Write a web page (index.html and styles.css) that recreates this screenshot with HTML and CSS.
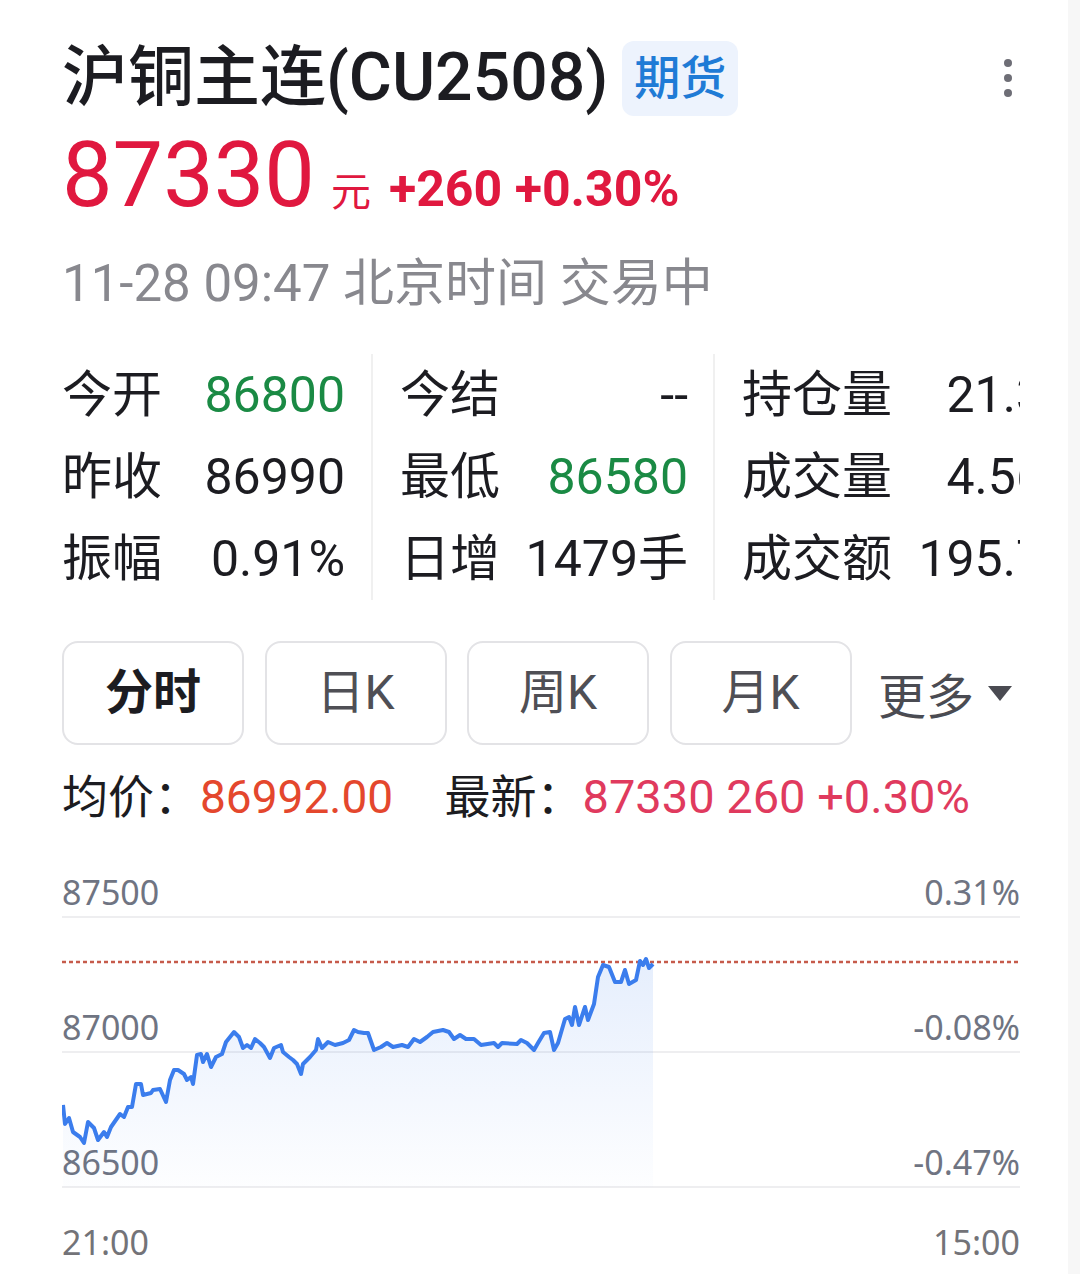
FILE: index.html
```html
<!DOCTYPE html>
<html>
<head lang="zh">
    <meta charset="UTF-8">
    <title>沪铜主连</title>
    <link rel="stylesheet" href="styles.css">
</head>
<body>
    <div id="page">
        <div class="head">
            <h1 class="name">沪铜主连(CU2508)</h1>
            <span class="tag">期货</span>
            <span class="more-dots"><i></i><i></i><i></i></span>
        </div>
        <div class="price">
            <span class="price-now">87330</span>
            <span class="price-unit">元</span>
            <span class="price-chg">+260 +0.30%</span>
        </div>
        <div class="status">11-28 09:47 北京时间 交易中</div>

        <div class="stats">
            <div class="stats-col col1">
                <div class="cell"><span>今开</span><b class="green">86800</b></div>
                <div class="cell"><span>昨收</span><b>86990</b></div>
                <div class="cell"><span>振幅</span><b>0.91%</b></div>
            </div>
            <div class="stats-col col2">
                <div class="cell"><span>今结</span><b>--</b></div>
                <div class="cell"><span>最低</span><b class="green">86580</b></div>
                <div class="cell"><span>日增</span><b>1479手</b></div>
            </div>
            <div class="stats-col col3">
                <div class="cell"><span>持仓量</span><b>21.3万</b></div>
                <div class="cell"><span>成交量</span><b>4.56万</b></div>
                <div class="cell"><span>成交额</span><b>195.7亿</b></div>
            </div>
        </div>

        <div class="tabs">
            <span class="tab active">分时</span>
            <span class="tab">日K</span>
            <span class="tab">周K</span>
            <span class="tab">月K</span>
            <span class="tab-more">更多<i class="caret"></i></span>
        </div>

        <div class="avg">
            <span>均价：</span><span class="avg-val">86992.00</span>
            <span class="latest-label">最新：</span><span class="latest-val">87330 260 +0.30%</span>
        </div>

        <div class="chart">
            <div class="grid-row first"><span>87500</span><span>0.31%</span></div>
            <div class="grid-row"><span>87000</span><span>-0.08%</span></div>
            <div class="grid-row"><span>86500</span><span>-0.47%</span></div>
            <svg class="plot" viewBox="0 0 958 361" width="958" height="361">
                <defs>
                    <linearGradient id="fill" x1="0" y1="0" x2="0" y2="1">
                        <stop offset="0" stop-color="#3b7ded" stop-opacity="0.13"/>
                        <stop offset="1" stop-color="#3b7ded" stop-opacity="0.01"/>
                    </linearGradient>
                </defs>
                <path fill="url(#fill)" d="M1,278 L3,297 7,291 11,305 18,310 22,316 26,295 32,301 36,313 42,305 45,310 49,300 58,287 62,290 66,280 70,280 74,257 79,257 81,268 89,266 91,263 98,262 104,275 108,253 112,243 116,243 122,247 125,253 129,250 131,257 135,228 139,227 141,235 145,227 149,240 154,230 160,227 164,215 168,210 172,205 177,210 181,221 185,218 189,221 193,212 198,216 202,220 208,231 212,221 219,218 221,225 227,230 231,233 235,237 239,247 241,237 248,230 254,223 256,212 260,221 266,215 273,218 281,216 287,213 292,203 296,205 302,206 306,206 312,223 319,220 325,216 331,220 340,218 346,220 352,212 358,215 365,210 371,205 381,203 387,205 392,212 398,208 404,212 412,212 419,218 432,216 436,220 440,216 455,217 459,213 465,216 472,223 476,216 482,206 488,205 492,223 496,216 503,192 507,190 510,198 513,180 517,198 523,180 526,193 532,177 536,150 541,138 547,140 553,155 559,155 563,143 567,157 574,153 578,134 581,138 584,132 587,141 591,137 L591,360 L1,360 Z"/>
                <line x1="0" y1="135" x2="958" y2="135" stroke="#c65b4b" stroke-width="2.5" stroke-dasharray="4 3"/>
                <path fill="none" stroke="#3b7ded" stroke-width="4" stroke-linejoin="round" d="M1,278 L3,297 7,291 11,305 18,310 22,316 26,295 32,301 36,313 42,305 45,310 49,300 58,287 62,290 66,280 70,280 74,257 79,257 81,268 89,266 91,263 98,262 104,275 108,253 112,243 116,243 122,247 125,253 129,250 131,257 135,228 139,227 141,235 145,227 149,240 154,230 160,227 164,215 168,210 172,205 177,210 181,221 185,218 189,221 193,212 198,216 202,220 208,231 212,221 219,218 221,225 227,230 231,233 235,237 239,247 241,237 248,230 254,223 256,212 260,221 266,215 273,218 281,216 287,213 292,203 296,205 302,206 306,206 312,223 319,220 325,216 331,220 340,218 346,220 352,212 358,215 365,210 371,205 381,203 387,205 392,212 398,208 404,212 412,212 419,218 432,216 436,220 440,216 455,217 459,213 465,216 472,223 476,216 482,206 488,205 492,223 496,216 503,192 507,190 510,198 513,180 517,198 523,180 526,193 532,177 536,150 541,138 547,140 553,155 559,155 563,143 567,157 574,153 578,134 581,138 584,132 587,141 591,137"/>
            </svg>
        </div>
        <div class="time-axis"><span>21:00</span><span>15:00</span></div>
    </div>
</body>
</html>
```

FILE: styles.css
```css
*{
    margin: 0;
    padding: 0;
    box-sizing: border-box;
}
html{
    background: #f7f7f7;
}
body{
    width: 1068px;
    min-height: 1274px;
    background: #fff;
    font-family: Roboto, "Noto Sans CJK SC", sans-serif;
    color: #1c1c21;
}
#page{
    padding: 40px 48px 0 62px;
}
.head{
    display: flex;
    align-items: center;
    height: 76px;
    white-space: nowrap;
}
.name{
    font-size: 66px;
    font-weight: 500;
    line-height: 76px;
}
.tag{
    margin-left: 14px;
    height: 75px;
    padding: 0 12px;
    border-radius: 12px;
    background: #edf3fd;
    color: #1f7bd6;
    font-size: 46px;
    font-weight: 500;
    line-height: 75px;
}
.more-dots{
    margin-left: auto;
    margin-right: 8px;
    display: flex;
    flex-direction: column;
    gap: 7px;
}
.more-dots i{
    width: 8px;
    height: 8px;
    border-radius: 50%;
    background: #6e6e76;
}
.price{
    margin-top: 15px;
    height: 90px;
    display: flex;
    align-items: baseline;
    color: #e0183f;
    line-height: 90px;
}
.price-now{
    font-size: 90px;
}
.price-unit{
    margin-left: 16px;
    font-size: 40px;
}
.price-chg{
    margin-left: 18px;
    font-size: 50px;
    font-weight: 700;
}
.status{
    margin-top: 33px;
    font-size: 51px;
    line-height: 60px;
    color: #88888e;
}
.stats{
    margin-top: 40px;
    width: 958px;
    overflow: hidden;
    display: flex;
    font-size: 50px;
}
.stats-col{
    flex: none;
}
.col1{
    width: 309px;
    padding-right: 26px;
}
.col2{
    width: 342px;
    padding: 0 25px 0 27px;
    border-left: 2px solid #f0f0f0;
}
.col3{
    width: 381px;
    padding-left: 27px;
    border-left: 2px solid #f0f0f0;
}
.cell{
    display: flex;
    justify-content: space-between;
    height: 82px;
    line-height: 82px;
    white-space: nowrap;
}
.cell b{
    font-weight: 400;
}
.green{
    color: #1a8a44;
}
.tabs{
    margin-top: 41px;
    display: flex;
    align-items: center;
    white-space: nowrap;
}
.tab{
    flex: none;
    width: 182px;
    height: 104px;
    margin-right: 20.5px;
    border: 2px solid #e3e3e6;
    border-radius: 16px;
    text-align: center;
    line-height: 100px;
    font-size: 48px;
    color: #4f4f55;
}
.tab.active{
    color: #1c1c21;
    font-weight: 700;
}
.tab-more{
    flex: none;
    margin-left: 6px;
    font-size: 48px;
    color: #4a4b52;
    display: flex;
    align-items: center;
}
.caret{
    margin-left: 14px;
    width: 0;
    height: 0;
    border-left: 12.5px solid transparent;
    border-right: 12.5px solid transparent;
    border-top: 15px solid #4a4b52;
}
.avg{
    margin-top: 22px;
    font-size: 46px;
    line-height: 60px;
    white-space: nowrap;
}
.avg-val{
    color: #e4472d;
}
.latest-label{
    margin-left: 40px;
}
.latest-val{
    font-size: 47px;
    color: #e03a5e;
}
.chart{
    position: relative;
    width: 958px;
}
.grid-row{
    height: 135px;
    display: flex;
    justify-content: space-between;
    align-items: flex-end;
    padding-bottom: 7px;
    border-bottom: 2px solid #eeeef0;
    font-family: "Noto Sans", sans-serif;
    font-size: 34px;
    line-height: 34px;
    color: #6f7482;
}
.grid-row.first{
    height: 91px;
}
.plot{
    position: absolute;
    left: 0;
    top: 0;
    pointer-events: none;
}
.time-axis{
    width: 958px;
    display: flex;
    justify-content: space-between;
    padding-top: 37px;
    font-family: "Noto Sans", sans-serif;
    font-size: 34px;
    line-height: 34px;
    color: #737378;
}
```
